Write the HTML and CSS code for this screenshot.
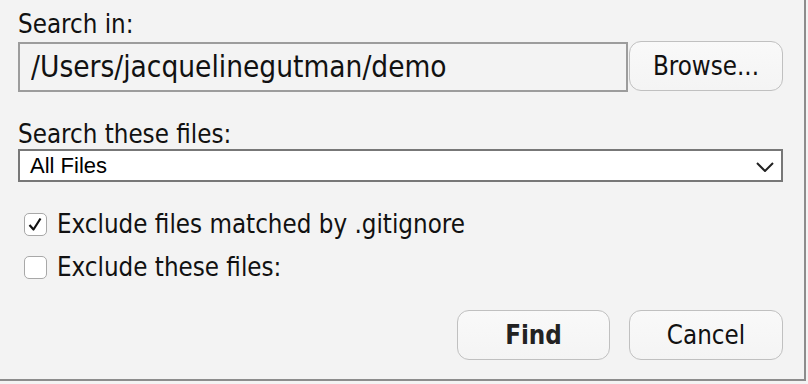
FILE: index.html
```html
<!DOCTYPE html>
<html lang="en">
  <head>
    <meta charset="UTF-8" />
    <title>Find in Files</title>
    <meta name="viewport" content="width=device-width, initial-scale=1.0" />
    <link rel="stylesheet" href="styles.css">
  </head>
  <body>
    <div class="dialog">
      <div class="label">Search in:</div>
      <div class="path-row">
        <input class="path-input" type="text" value="/Users/jacquelinegutman/demo" />
        <button class="btn browse-btn">Browse...</button>
      </div>

      <div class="label files-label">Search these files:</div>
      <div class="select">
        <span>All Files</span>
        <svg class="chevron" width="18" height="10" viewBox="0 0 18 10">
          <polyline points="1,1 9,9 17,1" fill="none" stroke="#222" stroke-width="2" />
        </svg>
      </div>

      <label class="check-row first">
        <span class="box">
          <svg width="21" height="21" viewBox="0 0 21 21">
            <polyline points="4.5,11 8.5,15.5 15.5,4.5" fill="none" stroke="#111" stroke-width="2.2" stroke-linejoin="round" />
          </svg>
        </span>
        Exclude files matched by .gitignore
      </label>
      <label class="check-row">
        <span class="box"></span>
        Exclude these files:
      </label>

      <div class="actions">
        <button class="btn find-btn">Find</button>
        <button class="btn">Cancel</button>
      </div>
    </div>
  </body>
</html>
```

FILE: styles.css
```css
body {
  margin: 0;
  background: #f3f3f3;
  font-family: "DejaVu Sans Condensed", "DejaVu Sans", sans-serif;
  color: #111;
}

.dialog {
  box-sizing: border-box;
  width: 806px;
  height: 381px;
  padding: 10px 21px 0 18px;
  background: #f3f3f3;
  border-right: 2px solid #8c8c8c;
  border-bottom: 2px solid #8c8c8c;
  display: flex;
  flex-direction: column;
}

.label {
  font-size: 25.7px;
  line-height: 28px;
  height: 28px;
}

.path-row {
  display: flex;
  align-items: flex-start;
  gap: 1px;
  margin-top: 4px;
}

.path-input {
  box-sizing: border-box;
  width: 610px;
  height: 50px;
  margin: 0;
  padding: 0 0 0 11px;
  border: 2px solid #9c9c9c;
  background: #f3f3f3;
  font-family: "DejaVu Sans Condensed", "DejaVu Sans", sans-serif;
  font-size: 29.5px;
  color: #111;
  outline: none;
}

.btn {
  box-sizing: border-box;
  width: 154px;
  height: 50px;
  margin: 0;
  padding: 0;
  border: 1.5px solid #c0c0c0;
  border-radius: 12px;
  background: linear-gradient(#f9f9f9, #f4f4f4);
  font-family: "DejaVu Sans Condensed", "DejaVu Sans", sans-serif;
  font-size: 25.7px;
  color: #111;
}

.browse-btn {
  margin-top: -1px;
}

.files-label {
  margin-top: 28px;
}

.select {
  box-sizing: border-box;
  height: 33px;
  margin-top: 1px;
  padding: 0 7px 0 10px;
  border: 2px solid #777;
  background: #fff;
  display: flex;
  align-items: center;
  justify-content: space-between;
  font-family: "Liberation Sans", Arial, sans-serif;
  font-size: 22px;
  color: #000;
}

.chevron {
  margin-top: 2px;
}

.check-row {
  display: flex;
  align-items: center;
  gap: 10px;
  height: 28px;
  margin: 15px 0 0 6px;
  font-size: 25.7px;
  line-height: 28px;
}

.check-row.first {
  margin-top: 28px;
}

.box {
  box-sizing: border-box;
  width: 23px;
  height: 23px;
  border: 1.5px solid #a8a8a8;
  border-radius: 5px;
  background: #fff;
  display: flex;
  align-items: center;
  justify-content: center;
}

.actions {
  display: flex;
  justify-content: flex-end;
  gap: 19px;
  margin-top: 29px;
}

.find-btn {
  width: 153px;
  font-weight: bold;
  color: #222;
}
```
